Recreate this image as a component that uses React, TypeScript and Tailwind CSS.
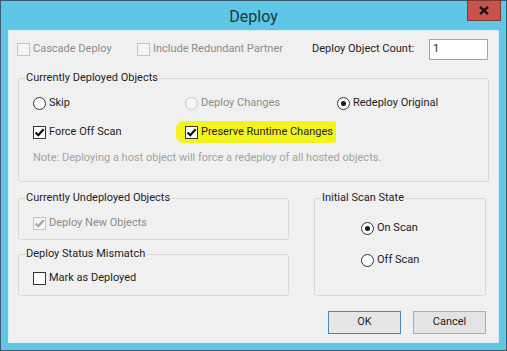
import React from 'react';

type BoxProps = { checked?: boolean; disabled?: boolean };

function CheckBox({ checked, disabled }: BoxProps) {
  return (
    <span
      className={`flex h-[13px] w-[13px] shrink-0 items-center justify-center border ${
        disabled ? 'border-[#c6c6c6] bg-[#f6f6f6]' : 'border-[#333333] bg-white'
      }`}
    >
      {checked && (
        <svg width="11" height="11" viewBox="0 0 11 11">
          <path
            d="M1.6 5.4 L4.3 8.2 L9.6 2.2"
            fill="none"
            stroke={disabled ? '#a6a6a6' : '#111111'}
            strokeWidth="2.2"
          />
        </svg>
      )}
    </span>
  );
}

function Radio({ checked, disabled }: BoxProps) {
  return (
    <span
      className={`flex h-[13px] w-[13px] shrink-0 items-center justify-center rounded-full border ${
        disabled ? 'border-[#c6c6c6] bg-[#f6f6f6]' : 'border-[#333333] bg-white'
      }`}
    >
      {checked && <span className="h-[5px] w-[5px] rounded-full bg-[#1a1a1a]" />}
    </span>
  );
}

function Option({
  kind,
  label,
  checked,
  disabled,
}: BoxProps & { kind: 'check' | 'radio'; label: string }) {
  return (
    <div className="flex h-[16px] items-center gap-[3px]">
      {kind === 'check' ? (
        <CheckBox checked={checked} disabled={disabled} />
      ) : (
        <Radio checked={checked} disabled={disabled} />
      )}
      <span className={disabled ? 'text-[#8c8c8c]' : 'text-[#1e1e1e]'}>{label}</span>
    </div>
  );
}

// group box: legend sits on the top border, content padding goes on the inner div
function Group({
  title,
  className,
  bodyClass,
  children,
}: {
  title: string;
  className: string;
  bodyClass: string;
  children: React.ReactNode;
}) {
  return (
    <fieldset className={`rounded-[3px] border border-[#d8d8d8] ${className}`}>
      <legend className="ml-[6px] px-[1px] leading-[16px] text-[#1e1e1e]">{title}</legend>
      <div className={bodyClass}>{children}</div>
    </fieldset>
  );
}

export default function App() {
  return (
    <div className="flex h-[351px] w-[507px] flex-col border border-[#3e5b6b] bg-[#5fc6e6] font-[Roboto,sans-serif] text-[11px] text-[#1e1e1e]">
      {/* title bar */}
      <div className="relative flex h-[29px] shrink-0 items-center justify-center">
        <span className="pt-[2px] text-[16px] text-[#1c3846]">Deploy</span>
        <button className="absolute right-[5px] top-[-1px] flex h-[21px] w-[34px] items-center justify-center border border-[#7d3733] bg-[#c8524c]">
          <svg width="10" height="9" viewBox="0 0 10 9">
            <path d="M1 0.8 L9 8.2 M9 0.8 L1 8.2" stroke="#151515" strokeWidth="2.3" />
          </svg>
        </button>
      </div>

      {/* client area */}
      <div className="mx-[7px] mb-[7px] flex flex-1 flex-col border border-[#d9ecf4] bg-[#f0f0f0]">
        <div className="ml-[8px] mt-[8px] flex h-[21px] items-center">
          <div className="w-[120px]">
            <Option kind="check" label="Cascade Deploy" disabled />
          </div>
          <div className="w-[175px]">
            <Option kind="check" label="Include Redundant Partner" disabled />
          </div>
          <span className="w-[117px]">Deploy Object Count:</span>
          <div className="flex h-[21px] w-[59px] items-center border border-[#9fa3a8] bg-white pl-[3px]">
            1
          </div>
        </div>

        <Group
          title="Currently Deployed Objects"
          className="ml-[9px] mt-[10px] w-[471px]"
          bodyClass="pb-[15px] pl-[14px]"
        >
          <div className="mt-[9px] grid grid-cols-[152px_152px_1fr] gap-y-[13px]">
            <Option kind="radio" label="Skip" />
            <Option kind="radio" label="Deploy Changes" disabled />
            <Option kind="radio" label="Redeploy Original" checked />
            <Option kind="check" label="Force Off Scan" checked />
            <div className="-ml-[9px] -my-[3px] self-start justify-self-start rounded-l-[8px] rounded-r-[3px] bg-[#f3f31f] py-[3px] pl-[9px] pr-[3px]">
              <Option kind="check" label="Preserve Runtime Changes" checked />
            </div>
            <div />
          </div>
          <div className="mt-[10px] h-[16px] leading-[16px] text-[#a3a3a3]">
            Note: Deploying a host object will force a redeploy of all hosted objects.
          </div>
        </Group>

        <div className="ml-[9px] mt-[8px] flex items-start">
          <div className="flex w-[271px] flex-col">
            <Group title="Currently Undeployed Objects" className="" bodyClass="pb-[8px] pl-[14px] pt-[9px]">
              <Option kind="check" label="Deploy New Objects" checked disabled />
            </Group>
            <Group title="Deploy Status Mismatch" className="mt-[6px]" bodyClass="pb-[9px] pl-[14px] pt-[8px]">
              <Option kind="check" label="Mark as Deployed" />
            </Group>
          </div>
          <Group
            title="Initial Scan State"
            className="ml-[25px] w-[172px]"
            bodyClass="flex flex-col gap-[16px] pb-[27px] pl-[46px] pt-[14px]"
          >
            <Option kind="radio" label="On Scan" checked />
            <Option kind="radio" label="Off Scan" />
          </Group>
        </div>

        <div className="mr-[12px] mt-[15px] flex justify-end gap-[12px]">
          <button className="h-[23px] w-[73px] border border-[#4a86b8] bg-[#e6e6e6]">OK</button>
          <button className="h-[23px] w-[73px] border border-[#acacac] bg-[#e3e3e3]">Cancel</button>
        </div>
      </div>
    </div>
  );
}
